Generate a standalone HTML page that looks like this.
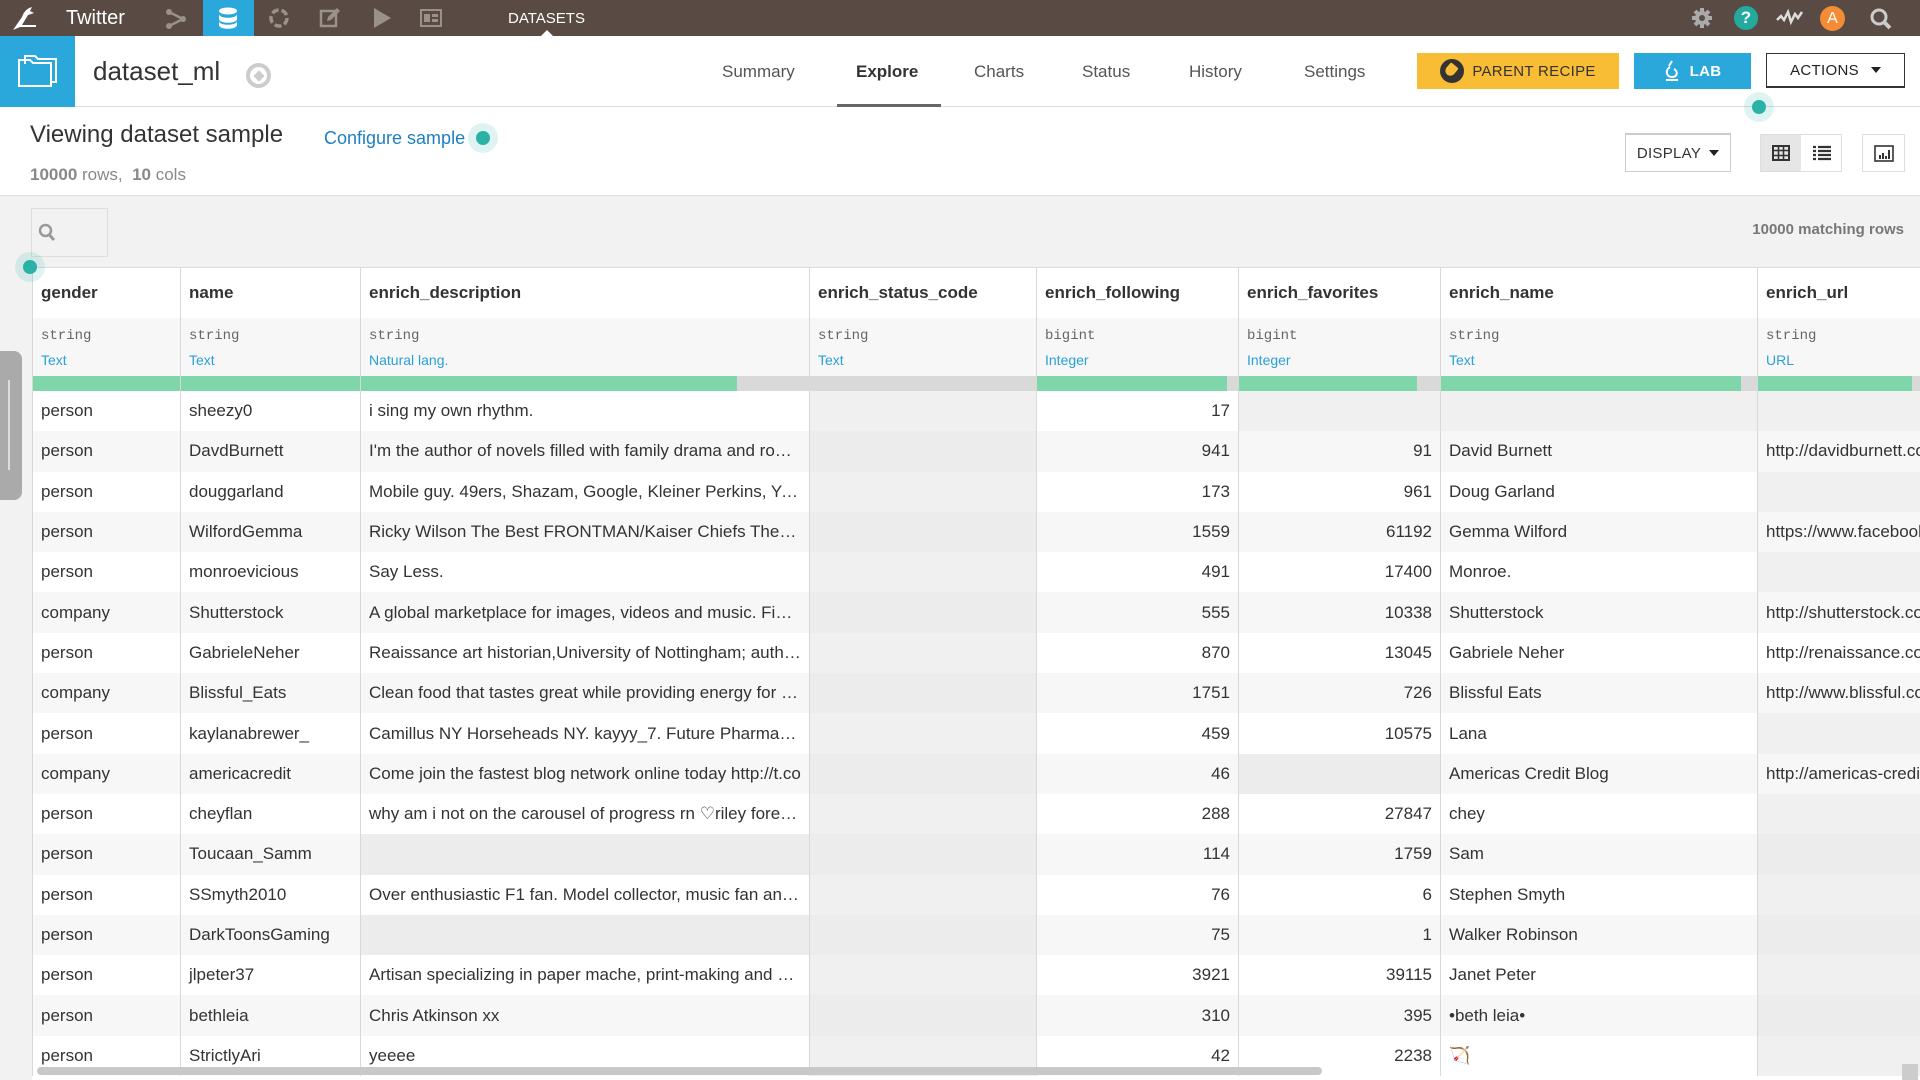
<!DOCTYPE html>
<html><head><meta charset="utf-8">
<style>
*{box-sizing:border-box;margin:0;padding:0}
body{width:1920px;height:1080px;overflow:hidden;background:#f2f2f2;font-family:"Liberation Sans",sans-serif;color:#333;position:relative}
.abs{position:absolute}
#top{left:0;top:0;width:1920px;height:36px;background:#594b43}
#hdr{left:0;top:36px;width:1920px;height:71px;background:#fff;border-bottom:1px solid #ddd}
.tab{position:absolute;top:62px;font-size:17px;color:#555}
.btn{position:absolute;font-size:15px;display:flex;align-items:center;justify-content:center;letter-spacing:.3px}
.dot{position:absolute;width:30px;height:30px;border-radius:50%;background:rgba(42,178,170,.15)}
.dot::after{content:"";position:absolute;left:8px;top:8px;width:14px;height:14px;border-radius:50%;background:#2ab2a6}
#sub{left:0;top:107px;width:1920px;height:89px;background:#fff;border-bottom:1px solid #ddd}
table{border-collapse:collapse;table-layout:fixed}
td{border-left:1px solid #d8d8d8;padding:0 8px;white-space:nowrap;overflow:hidden;text-overflow:ellipsis;font-size:17px;height:40.3px;color:#333}
tr.h td{height:50px;background:#fff;font-weight:bold;font-size:17px}
tr.t1 td{height:29px;background:#f7f7f7;font-family:"Liberation Mono",monospace;font-size:14px;color:#666;vertical-align:bottom;padding-bottom:3px}
tr.t2 td{height:29px;background:#f7f7f7;font-size:14px;color:#2a9fd8;vertical-align:top;padding-top:5px}
tr.bar td{height:15px;padding:0;background:#d9d9d9}
tr.bar td div{height:15px;background:#80d6ab}
tr.r td{background:#fff}
tr.r:nth-child(even) td{background:#f7f7f7}
td.n{text-align:right}
td.e{background:#f0f0f0!important}
tr.r:nth-child(even) td.e{background:#ececec!important}
</style></head><body>
<div id="top" class="abs">
 <svg class="abs" style="left:10px;top:5px" width="32" height="26" viewBox="0 0 32 26"><path d="M3 25 L12 12 C14 6 18 3 22 2 L20 6 L24 8 L18 10 L12 20 L26 20 L26 22 L10 22 Z" fill="#fff"/></svg>
 <div class="abs" style="left:66px;top:7px;font-size:20px;color:#fff">Twitter</div>
 <svg class="abs" style="left:165px;top:8px" width="22" height="22" viewBox="0 0 22 22"><circle cx="4" cy="4" r="3" fill="#9b918b"/><circle cx="18" cy="11" r="3" fill="#9b918b"/><circle cx="4" cy="18" r="3" fill="#9b918b"/><path d="M4 4L18 11L4 18" stroke="#9b918b" stroke-width="2.5" fill="none"/></svg>
 <div class="abs" style="left:203px;top:0;width:51px;height:36px;background:#2aa8dc"></div>
 <svg class="abs" style="left:218px;top:7px" width="20" height="22" viewBox="0 0 20 22"><ellipse cx="10" cy="4" rx="9" ry="3.5" fill="#fff"/><path d="M1 7c0 5 18 5 18 0v5c0 5-18 5-18 0z M1 14c0 5 18 5 18 0v4c0 5-18 5-18 0z" fill="#fff"/></svg>
 <svg class="abs" style="left:268px;top:7px" width="22" height="22" viewBox="0 0 22 22"><circle cx="11" cy="11" r="8" stroke="#9b918b" stroke-width="3.5" fill="none" stroke-dasharray="7 3"/></svg>
 <svg class="abs" style="left:319px;top:7px" width="22" height="22" viewBox="0 0 22 22"><rect x="2" y="4" width="15" height="15" stroke="#9b918b" stroke-width="2.5" fill="none"/><path d="M8 14l1-4 9-9 3 3-9 9z" fill="#9b918b"/></svg>
 <svg class="abs" style="left:371px;top:7px" width="22" height="22" viewBox="0 0 22 22"><path d="M3 1L20 11L3 21Z" fill="#9b918b"/></svg>
 <svg class="abs" style="left:420px;top:9px" width="22" height="18" viewBox="0 0 22 18"><rect x="1" y="1" width="20" height="16" stroke="#9b918b" stroke-width="2" fill="none"/><rect x="4" y="5" width="6" height="8" fill="#9b918b"/><rect x="12" y="5" width="6" height="3" fill="#9b918b"/><rect x="12" y="10" width="6" height="3" fill="#9b918b"/></svg>
 <div class="abs" style="left:508px;top:10px;font-size:15px;color:#fff">DATASETS</div>
 <div class="abs" style="left:541px;top:30px;width:0;height:0;border:6px solid transparent;border-bottom-color:#fff;border-top:0"></div>
 <svg class="abs" style="left:1690px;top:6px" width="24" height="24" viewBox="0 0 24 24"><circle cx="12" cy="12" r="7" fill="#aaa"/><g stroke="#aaa" stroke-width="4"><path d="M12 2v20M2 12h20M5 5l14 14M19 5L5 19"/></g><circle cx="12" cy="12" r="3" fill="#594b43"/></svg>
 <div class="abs" style="left:1734px;top:6px;width:24px;height:24px;border-radius:50%;background:#22aa9e;color:#fff;font-weight:bold;font-size:17px;text-align:center;line-height:24px">?</div>
 <svg class="abs" style="left:1776px;top:8px" width="28" height="18" viewBox="0 0 28 18"><path d="M1 12L5 8L8 12L12 4L15 14L19 6L22 10L26 4" stroke="#ddd" stroke-width="2.5" fill="none"/></svg>
 <div class="abs" style="left:1820px;top:6px;width:25px;height:25px;border-radius:50%;background:#f38c34;color:#fff;font-size:16px;text-align:center;line-height:25px">A</div>
 <svg class="abs" style="left:1869px;top:7px" width="24" height="24" viewBox="0 0 24 24"><circle cx="10" cy="10" r="7" stroke="#ccc" stroke-width="3" fill="none"/><path d="M15 15L21 21" stroke="#ccc" stroke-width="4"/></svg>
</div>
<div id="hdr" class="abs">
 <div class="abs" style="left:0;top:0;width:75px;height:71px;background:#2aa8dc"></div>
 <svg class="abs" style="left:17px;top:18px" width="42" height="34" viewBox="0 0 42 34"><path d="M2 6h11l3 3h18v23H2z" stroke="#fff" stroke-width="2" fill="none"/><path d="M8 10v-8h10l3 3h18v23h-5" stroke="#fff" stroke-width="2" fill="none"/></svg>
 <div class="abs" style="left:93px;top:20px;font-size:26px;color:#333">dataset_ml</div>
 <div class="abs" style="left:246px;top:27px;width:25px;height:25px;border-radius:50%;border:4px solid #ccc"></div>
 <div class="abs" style="left:255px;top:36px;width:8px;height:8px;background:#ccc;transform:rotate(45deg)"></div>
</div>
<div class="tab" style="left:722px">Summary</div>
<div class="tab" style="left:856px;font-weight:bold;color:#333">Explore</div>
<div class="abs" style="left:837px;top:104px;width:104px;height:3px;background:#666"></div>
<div class="tab" style="left:974px">Charts</div>
<div class="tab" style="left:1082px">Status</div>
<div class="tab" style="left:1189px">History</div>
<div class="tab" style="left:1304px">Settings</div>
<div class="btn" style="left:1417px;top:53px;width:202px;height:36px;background:#f8bc35;color:#333"><span style="display:inline-block;width:24px;height:24px;border-radius:50%;background:#333;margin-right:8px;position:relative"><span style="position:absolute;left:6px;top:5px;width:10px;height:12px;background:#f8bc35;transform:rotate(40deg);border-radius:2px 2px 6px 6px"></span></span>PARENT RECIPE</div>
<div class="btn" style="left:1634px;top:53px;width:117px;height:36px;background:#2aa8dc;color:#fff;font-weight:bold"><svg width="16" height="24" viewBox="0 0 16 24" style="margin-right:10px"><path d="M8 2L5 7M6 8c-5 3-4 10 2 10s6-6 2-8M2 21h12" stroke="#fff" stroke-width="2" fill="none"/></svg>LAB</div>
<div class="btn" style="left:1766px;top:53px;width:139px;height:35px;background:#fff;border:1px solid #333;border-bottom-width:2px;color:#222">ACTIONS <span style="margin-left:12px;border:5px solid transparent;border-top:6px solid #222;border-bottom:0"></span></div>
<div id="sub" class="abs"></div>
<div class="dot" style="left:1744px;top:92px"></div>
<div class="abs" style="left:30px;top:121px;font-size:24px;color:#333">Viewing dataset sample</div>
<div class="abs" style="left:324px;top:128px;font-size:18px;color:#1f7fc0">Configure sample</div>
<div class="dot" style="left:468px;top:123px"></div>
<div class="abs" style="left:30px;top:165px;font-size:17px;color:#888"><b>10000</b> rows,&nbsp; <b>10</b> cols</div>
<div class="btn" style="left:1625px;top:133px;width:106px;height:39px;background:#fff;border:1px solid #ccc;border-top:2px solid #ccc;color:#333">DISPLAY <span style="margin-left:8px;border:5px solid transparent;border-top:6px solid #222;border-bottom:0"></span></div>
<div class="abs" style="left:1760px;top:134px;width:82px;height:38px;border:1px solid #ddd;background:#fff"></div>
<div class="abs" style="left:1761px;top:135px;width:40px;height:36px;background:#e6e6e6"></div>
<svg class="abs" style="left:1772px;top:145px" width="18" height="16" viewBox="0 0 18 16"><rect x="1" y="1" width="16" height="14" fill="none" stroke="#333" stroke-width="2"/><path d="M1 5.5h16M1 10.5h16M6.5 1v14M11.5 1v14" stroke="#333" stroke-width="1.6"/></svg>
<svg class="abs" style="left:1813px;top:145px" width="18" height="16" viewBox="0 0 18 16"><path d="M0 2h3M5 2h13M0 6h3M5 6h13M0 10h3M5 10h13M0 14h3M5 14h13" stroke="#333" stroke-width="2.2"/></svg>
<div class="abs" style="left:1862px;top:134px;width:43px;height:38px;border:1px solid #ddd;background:#fff"></div>
<svg class="abs" style="left:1874px;top:145px" width="20" height="17" viewBox="0 0 20 17"><rect x="1" y="1" width="18" height="15" fill="none" stroke="#333" stroke-width="1.6"/><path d="M6 14v-4M9 14v-6M12 14v-3M15 14v-9" stroke="#333" stroke-width="2"/></svg>
<div class="abs" style="left:31px;top:208px;width:77px;height:49px;border:1px solid #ddd;background:#f2f2f2"></div>
<svg class="abs" style="left:38px;top:223px" width="18" height="19" viewBox="0 0 18 19"><circle cx="7.5" cy="7.5" r="5.5" stroke="#999" stroke-width="2.5" fill="none"/><path d="M11.5 12l4.5 5" stroke="#999" stroke-width="3"/></svg>
<div class="abs" style="right:16px;top:221px;font-size:15px;font-weight:bold;color:#777">10000 matching rows</div>
<div class="abs" style="left:32px;top:267px;width:1888px;height:813px;overflow:hidden;background:#fff;border-top:1px solid #ddd">
<table style="width:2050px">
<colgroup><col style="width:148px"><col style="width:180px"><col style="width:449px"><col style="width:227px"><col style="width:202px"><col style="width:202px"><col style="width:317px"><col style="width:325px"></colgroup>
<thead>
<tr class="h"><td>gender</td><td>name</td><td>enrich_description</td><td>enrich_status_code</td><td>enrich_following</td><td>enrich_favorites</td><td>enrich_name</td><td>enrich_url</td></tr>
<tr class="t1"><td>string</td><td>string</td><td>string</td><td>string</td><td>bigint</td><td>bigint</td><td>string</td><td>string</td></tr>
<tr class="t2"><td>Text</td><td>Text</td><td>Natural lang.</td><td>Text</td><td>Integer</td><td>Integer</td><td>Text</td><td>URL</td></tr>
<tr class="bar"><td><div style="width:100%"></div></td><td><div style="width:100%"></div></td><td><div style="width:376px"></div></td><td></td><td><div style="width:190px"></div></td><td><div style="width:178px"></div></td><td><div style="width:300px"></div></td><td><div style="width:154px"></div></td></tr>
</thead>
<tbody>
<tr class="r"><td>person</td><td>sheezy0</td><td>i sing my own rhythm.</td><td class="e"></td><td class="n">17</td><td class="e"></td><td class="e"></td><td class="e"></td></tr>
<tr class="r"><td>person</td><td>DavdBurnett</td><td>I'm the author of novels filled with family drama and romance</td><td class="e"></td><td class="n">941</td><td class="n">91</td><td>David Burnett</td><td>http://davidburnett.com</td></tr>
<tr class="r"><td>person</td><td>douggarland</td><td>Mobile guy. 49ers, Shazam, Google, Kleiner Perkins, Yahoo!</td><td class="e"></td><td class="n">173</td><td class="n">961</td><td>Doug Garland</td><td class="e"></td></tr>
<tr class="r"><td>person</td><td>WilfordGemma</td><td>Ricky Wilson The Best FRONTMAN/Kaiser Chiefs The Best</td><td class="e"></td><td class="n">1559</td><td class="n">61192</td><td>Gemma Wilford</td><td>https://www.facebook.com</td></tr>
<tr class="r"><td>person</td><td>monroevicious</td><td>Say Less.</td><td class="e"></td><td class="n">491</td><td class="n">17400</td><td>Monroe.</td><td class="e"></td></tr>
<tr class="r"><td>company</td><td>Shutterstock</td><td>A global marketplace for images, videos and music. Find more</td><td class="e"></td><td class="n">555</td><td class="n">10338</td><td>Shutterstock</td><td>http://shutterstock.com</td></tr>
<tr class="r"><td>person</td><td>GabrieleNeher</td><td>Reaissance art historian,University of Nottingham; author of</td><td class="e"></td><td class="n">870</td><td class="n">13045</td><td>Gabriele Neher</td><td>http://renaissance.com</td></tr>
<tr class="r"><td>company</td><td>Blissful_Eats</td><td>Clean food that tastes great while providing energy for you</td><td class="e"></td><td class="n">1751</td><td class="n">726</td><td>Blissful Eats</td><td>http://www.blissful.com</td></tr>
<tr class="r"><td>person</td><td>kaylanabrewer_</td><td>Camillus NY Horseheads NY. kayyy_7. Future Pharmacist</td><td class="e"></td><td class="n">459</td><td class="n">10575</td><td>Lana</td><td class="e"></td></tr>
<tr class="r"><td>company</td><td>americacredit</td><td>Come join the fastest blog network online today http://t.co</td><td class="e"></td><td class="n">46</td><td class="e"></td><td>Americas Credit Blog</td><td>http://americas-credit.com</td></tr>
<tr class="r"><td>person</td><td>cheyflan</td><td>why am i not on the carousel of progress rn ♡riley forever</td><td class="e"></td><td class="n">288</td><td class="n">27847</td><td>chey</td><td class="e"></td></tr>
<tr class="r"><td>person</td><td>Toucaan_Samm</td><td class="e"></td><td class="e"></td><td class="n">114</td><td class="n">1759</td><td>Sam</td><td class="e"></td></tr>
<tr class="r"><td>person</td><td>SSmyth2010</td><td>Over enthusiastic F1 fan. Model collector, music fan and more</td><td class="e"></td><td class="n">76</td><td class="n">6</td><td>Stephen Smyth</td><td class="e"></td></tr>
<tr class="r"><td>person</td><td>DarkToonsGaming</td><td class="e"></td><td class="e"></td><td class="n">75</td><td class="n">1</td><td>Walker Robinson</td><td class="e"></td></tr>
<tr class="r"><td>person</td><td>jlpeter37</td><td>Artisan specializing in paper mache, print-making and more</td><td class="e"></td><td class="n">3921</td><td class="n">39115</td><td>Janet Peter</td><td class="e"></td></tr>
<tr class="r"><td>person</td><td>bethleia</td><td>Chris Atkinson xx</td><td class="e"></td><td class="n">310</td><td class="n">395</td><td>•beth leia•</td><td class="e"></td></tr>
<tr class="r"><td>person</td><td>StrictlyAri</td><td>yeeee</td><td class="e"></td><td class="n">42</td><td class="n">2238</td><td style="color:#a08060">🏹</td><td class="e"></td></tr>
</tbody></table>
</div>
<div class="abs" style="left:0;top:351px;width:22px;height:149px;background:#aaa;border-radius:0 8px 8px 0"></div>
<div class="abs" style="left:8px;top:380px;width:2px;height:90px;background:#ddd"></div>
<div class="dot" style="left:15px;top:252px"></div>
<div class="abs" style="left:37px;top:1067px;width:1285px;height:8px;background:#c8c8c8;border-radius:4px"></div>
<div class="abs" style="left:1902px;top:1064px;width:16px;height:16px;background:#ccc"></div>
</body></html>
